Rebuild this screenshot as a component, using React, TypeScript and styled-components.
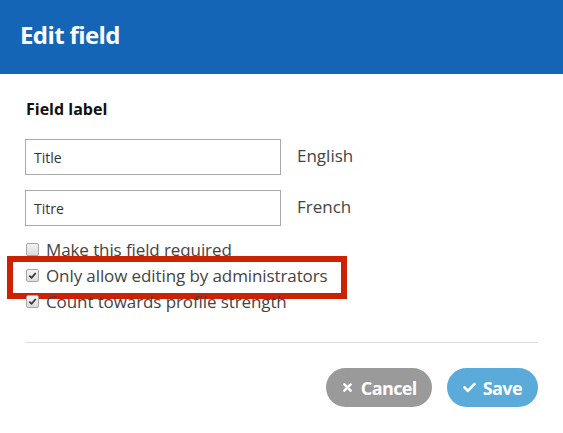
import React from "react";
import styled, { createGlobalStyle } from "styled-components";
import { FaTimes, FaCheck } from "react-icons/fa";

const Global = createGlobalStyle`
  html, body { margin: 0; padding: 0; background: #fff; }
  body { font-family: "Open Sans", "Noto Sans", sans-serif; color: #333; }
  *, *::before, *::after { box-sizing: border-box; }
`;

const Dialog = styled.div`
  width: 563px;
  height: 433px;
  background: #fff;
  display: flex;
  flex-direction: column;
`;

const Header = styled.header`
  height: 74px;
  background: #1565b7;
  display: flex;
  align-items: center;
  padding: 0 20px 6px;
`;

const Title = styled.h1`
  margin: 0;
  color: #fff;
  font-size: 24px;
  font-weight: 700;
  letter-spacing: -0.6px;
`;

const Body = styled.div`
  padding: 25px 25px 0;
  display: flex;
  flex-direction: column;
`;

const SectionLabel = styled.div`
  font-size: 16px;
  font-weight: 700;
  color: #111;
  line-height: 20px;
  margin: 0 0 20px 1px;
`;

const InputRow = styled.div`
  display: flex;
  align-items: center;
  gap: 16px;
  margin-bottom: 15px;
`;

const TextInput = styled.input`
  width: 256px;
  height: 36px;
  border: 1px solid #a9a9a9;
  padding: 0 8px;
  font-family: inherit;
  font-size: 14px;
  color: #333;
  outline: none;
`;

const LangLabel = styled.span`
  font-size: 17px;
  color: #444;
  margin-top: -4px;
`;

const Checks = styled.div`
  display: flex;
  flex-direction: column;
  margin-top: -5px;
`;

const CheckRow = styled.label<{ $highlight?: boolean }>`
  position: relative;
  display: flex;
  align-items: center;
  gap: 7px;
  height: 26px;
  font-size: 17px;
  color: #444;
  letter-spacing: -0.1px;
  ${(p) =>
    p.$highlight &&
    `
    &::before {
      content: "";
      position: absolute;
      left: -18px;
      top: -6px;
      width: 340px;
      height: 43px;
      border: 6px solid #cc2200;
      pointer-events: none;
    }
  `}
`;

const Box = styled.span<{ $checked?: boolean }>`
  flex: none;
  margin-left: 1px;
  width: 13px;
  height: 13px;
  border: 1px solid #a6a6a6;
  border-radius: 2px;
  background: linear-gradient(#f3f3f3, #dcdcdc);
  display: flex;
  align-items: center;
  justify-content: center;
  color: #333;
  svg { width: 9px; height: 9px; }
`;

const Divider = styled.hr`
  border: 0;
  border-top: 1px solid #ddd;
  margin: 28px 0 25px;
`;

const Actions = styled.div`
  display: flex;
  justify-content: flex-end;
  gap: 15px;
`;

const Button = styled.button<{ $variant: "cancel" | "save" }>`
  height: 39px;
  border: 0;
  border-radius: 20px;
  padding: 0 ${(p) => (p.$variant === "cancel" ? "15px" : "16px")};
  display: flex;
  align-items: center;
  gap: 7px;
  color: #fff;
  font-family: inherit;
  font-weight: 700;
  font-size: 18px;
  letter-spacing: -0.6px;
  background: ${(p) => (p.$variant === "cancel" ? "#9a9a9a" : "#5aabd9")};
  svg { font-size: 13px; }
`;

function Check({ checked }: { checked?: boolean }) {
  return (
    <Box $checked={checked} role="checkbox" aria-checked={!!checked}>
      {checked && (
        <svg viewBox="0 0 10 10">
          <path d="M1.5 5.2 L4 7.6 L8.6 2.2" fill="none" stroke="#333" strokeWidth="1.9" />
        </svg>
      )}
    </Box>
  );
}

export default function App() {
  return (
    <>
      <Global />
      <Dialog>
        <Header>
          <Title>Edit field</Title>
        </Header>
        <Body>
          <SectionLabel>Field label</SectionLabel>
          <InputRow>
            <TextInput defaultValue="Title" />
            <LangLabel>English</LangLabel>
          </InputRow>
          <InputRow>
            <TextInput defaultValue="Titre" />
            <LangLabel>French</LangLabel>
          </InputRow>
          <Checks>
            <CheckRow>
              <Check />
              Make this field required
            </CheckRow>
            <CheckRow $highlight>
              <Check checked />
              Only allow editing by administrators
            </CheckRow>
            <CheckRow>
              <Check checked />
              Count towards profile strength
            </CheckRow>
          </Checks>
          <Divider />
          <Actions>
            <Button $variant="cancel">
              <FaTimes /> Cancel
            </Button>
            <Button $variant="save">
              <FaCheck /> Save
            </Button>
          </Actions>
        </Body>
      </Dialog>
    </>
  );
}
